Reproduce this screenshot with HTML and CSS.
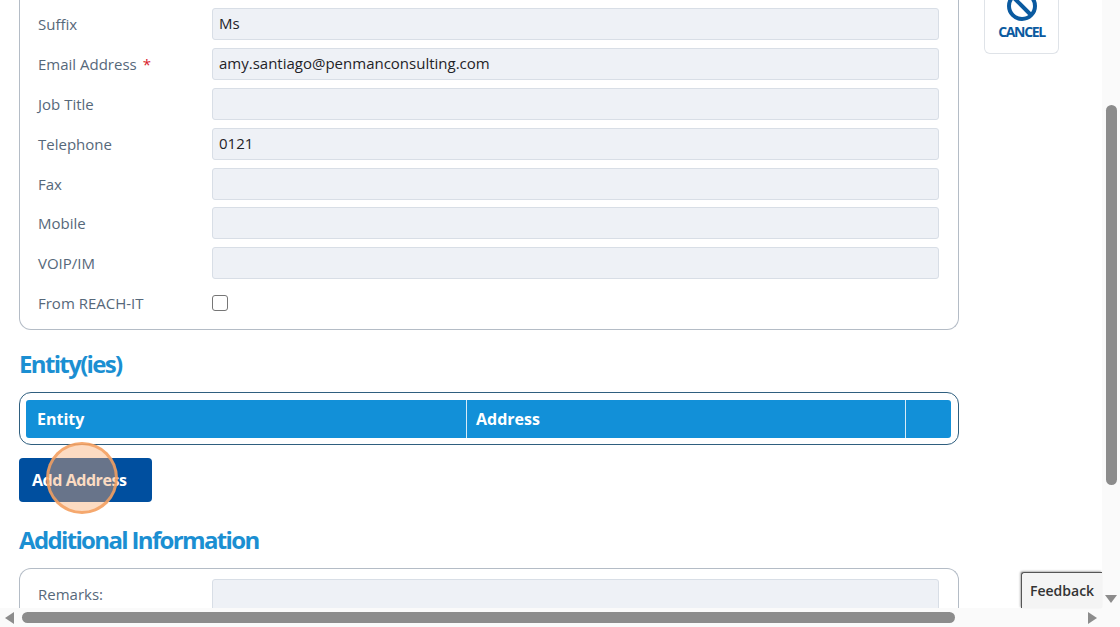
FILE: index.html
```html
<!DOCTYPE html>
<html lang="en">
<head>
<meta charset="utf-8">
<title>Contact</title>
<link rel="stylesheet" href="styles.css">
</head>
<body>
<div class="page">
  <main class="main">
    <section class="card card-top">
      <div class="row"><label class="label">Suffix</label><div class="input">Ms</div></div>
      <div class="row"><label class="label">Email Address <span class="req">*</span></label><div class="input">amy.santiago@penmanconsulting.com</div></div>
      <div class="row"><label class="label">Job Title</label><div class="input"></div></div>
      <div class="row"><label class="label">Telephone</label><div class="input">0121</div></div>
      <div class="row"><label class="label">Fax</label><div class="input"></div></div>
      <div class="row"><label class="label">Mobile</label><div class="input"></div></div>
      <div class="row"><label class="label">VOIP/IM</label><div class="input"></div></div>
      <div class="row"><label class="label">From REACH-IT</label><div class="check"></div></div>
    </section>
    <h2 class="heading heading-entity">Entity(ies)</h2>
    <div class="table-frame">
      <div class="table-head">
        <div class="th th-a">Entity</div>
        <div class="th th-b">Address</div>
        <div class="th th-c"></div>
      </div>
    </div>
    <div class="btn-wrap">
      <button class="btn">Add Address</button>
      <span class="pulse"></span>
    </div>
    <h2 class="heading heading-info">Additional Information</h2>
    <section class="card card-bottom">
      <div class="row"><label class="label">Remarks:</label><div class="input input-tall"></div></div>
    </section>
  </main>
  <aside class="side">
    <div class="cancel">
      <svg class="cancel-icon" width="30" height="30" viewBox="0 0 30 30" aria-hidden="true">
        <circle cx="15" cy="15" r="13" fill="none" stroke="#0a5aa0" stroke-width="4"/>
        <line x1="6" y1="6" x2="24" y2="24" stroke="#0a5aa0" stroke-width="4"/>
      </svg>
      <span class="cancel-text">CANCEL</span>
    </div>
  </aside>
</div>
<div class="vbar"><div class="vthumb"></div><span class="arrow-down"></span></div>
<div class="hbar">
  <span class="arrow-left"></span>
  <div class="hthumb"></div>
  <span class="arrow-right"></span>
</div>
<div class="feedback">Feedback</div>
</body>
</html>
```
FILE: styles.css
```css
* { box-sizing: border-box; }
html, body { margin: 0; height: 100%; overflow: hidden; background: #fff; }
body { font-family: "Open Sans", "Noto Sans", sans-serif; color: #1f2328; position: relative; }

.page { display: flex; align-items: flex-start; padding-left: 19px; height: 627px; overflow: hidden; }
.main { width: 940px; flex: none; }
.side { margin-left: 25px; width: 75px; }

.card { border: 1px solid #b4bcc6; border-radius: 12px; padding: 0 18px; background: #fff; }
.card-top { border-top: 0; border-top-left-radius: 0; border-top-right-radius: 0; padding-top: 8px; height: 330px; }
.card-bottom { border-bottom: 0; border-bottom-left-radius: 0; border-bottom-right-radius: 0; padding-top: 10px; height: 40px; overflow: hidden; }

.row { display: flex; align-items: center; height: 32px; margin-bottom: 7.9px; }
.label { width: 174px; flex: none; font-size: 15px; line-height: 20px; color: #56687a; }
.req { color: #d9202c; margin-left: 2px; }
.input { width: 727px; height: 32px; flex: none; background: #eef1f6; border: 1px solid #d8dee6; border-radius: 3px; padding: 0 6px; font-size: 15px; line-height: 29px; color: #1f2328; }
.input-tall { height: 40px; align-self: flex-start; }
.card-bottom .row { height: 30px; margin: 0; }
.check { width: 16px; height: 16px; border: 1.5px solid #767676; border-radius: 3px; background: #fff; margin-top: -1px; }

.heading { margin: 0; font-size: 24px; line-height: 32px; font-weight: 700; color: #1b8fd2; letter-spacing: -1.65px; }
.heading-entity { margin-top: 18px; margin-bottom: 12px; }
.heading-info { margin-top: 22px; margin-bottom: 12px; }

.table-frame { height: 53px; border: 1px solid #2f5f7f; border-radius: 12px; padding: 7px 7px 6px 6px; }
.table-head { display: flex; height: 38px; background: #1290d8; border-radius: 3px; color: #fff; font-size: 16px; font-weight: 700; line-height: 38px; }
.th { border-right: 1px solid #d6ebf7; }
.th-a { width: 441px; padding-left: 11px; }
.th-b { width: 439px; padding-left: 9px; }
.th-c { flex: 1; border-right: 0; }

.btn-wrap { position: relative; margin-top: 13px; height: 44px; }
.btn { display: block; width: 133px; height: 44px; border: 0; border-radius: 4px; background: #004f9f; color: #fff; font-family: inherit; font-size: 16px; font-weight: 700; letter-spacing: -0.45px; padding: 0 0 0 13px; text-align: left; }
.pulse { position: absolute; left: 27px; top: -16px; width: 72px; height: 72px; border-radius: 50%; background: rgba(248, 170, 110, 0.42); border: 3px solid rgba(244, 160, 95, 0.85); }

.cancel { display: flex; flex-direction: column; align-items: center; height: 54px; border: 1px solid #dfe3e8; border-top: 0; border-radius: 0 0 6px 6px; background: #fff; }
.cancel-icon { margin-top: -9px; flex: none; }
.cancel-text { font-size: 14px; line-height: 18px; font-weight: 700; color: #0a5aa0; letter-spacing: -1.35px; margin-top: 2px; }

.vbar { position: absolute; right: 0; top: 0; width: 18px; height: 608px; background: #fafafa; }
.vthumb { position: absolute; left: 4px; top: 105px; width: 11px; height: 380px; border-radius: 6px; background: #8c8c8c; }
.arrow-down { position: absolute; left: 3px; top: 595px; border-left: 6px solid transparent; border-right: 6px solid transparent; border-top: 8px solid #8c8c8c; }

.hbar { position: absolute; left: 0; right: 0; bottom: 0; height: 19px; background: #fafafa; display: flex; align-items: center; padding: 0 23px 0 5px; }
.hthumb { width: 933px; height: 11px; margin-left: 8px; border-radius: 6px; background: #8c8c8c; }
.arrow-left { border-top: 6px solid transparent; border-bottom: 6px solid transparent; border-right: 9px solid #8c8c8c; }
.arrow-right { margin-left: auto; border-top: 6px solid transparent; border-bottom: 6px solid transparent; border-left: 9px solid #8c8c8c; }

.feedback { position: absolute; left: 1021px; top: 572px; width: 81px; height: 36px; background: #f4f4f4; border: 1px solid #555; border-width: 1px 0 0 1px; border-radius: 3px 0 0 0; box-shadow: -1px -1px 2px rgba(0,0,0,.3); font-size: 14px; font-weight: 600; line-height: 36px; padding-left: 8px; color: #333; }
```
